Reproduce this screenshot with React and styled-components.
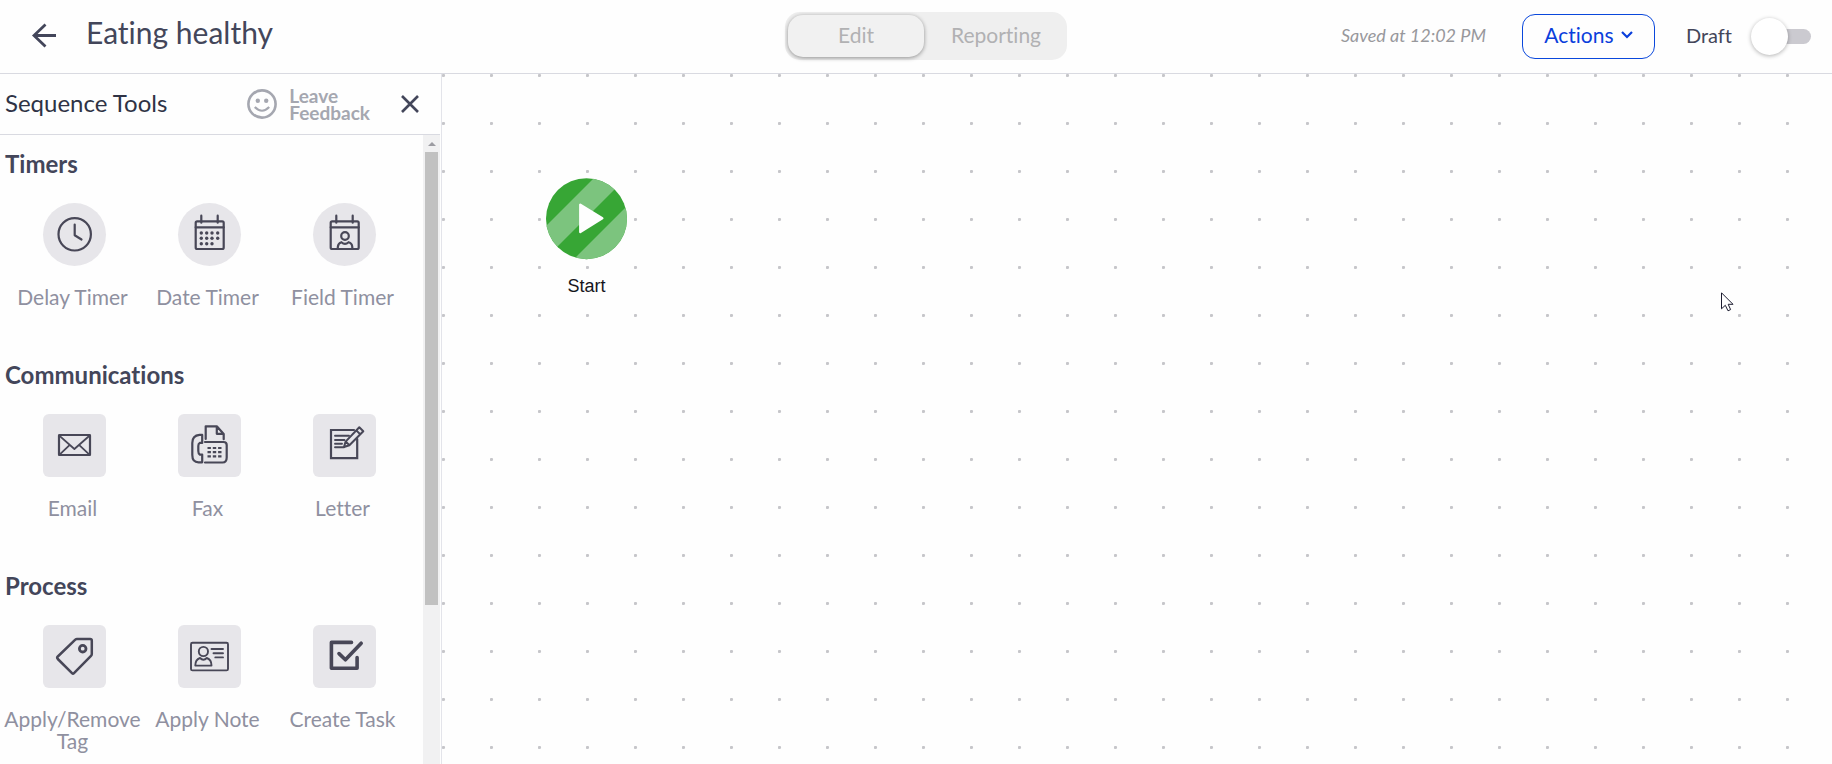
import { useState } from "react";
import styled, { createGlobalStyle } from "styled-components";

const GlobalStyle = createGlobalStyle`
  * {
    box-sizing: border-box;
  }
  body {
    margin: 0;
    background: #fefefe;
    font-family: Lato, "Liberation Sans", sans-serif;
    font-variant-ligatures: none;
    color: #43465a;
  }
  button {
    font-family: inherit;
    font-variant-ligatures: none;
    cursor: pointer;
  }
`;

const Page = styled.div`
  display: flex;
  flex-direction: column;
  height: 100vh;
  overflow: hidden;
`;

/* top bar */

const Header = styled.header`
  display: grid;
  grid-template-columns: 1fr auto 1fr;
  align-items: center;
  height: 74px;
  flex-shrink: 0;
  padding: 0 21px 1px 31px;
  border-bottom: 1px solid #d9dae1;
`;

const HeaderLeft = styled.div`
  display: flex;
  align-items: center;
  gap: 29px;
`;

const HeaderRight = styled.div`
  display: flex;
  align-items: center;
  justify-content: flex-end;
`;

const IconButton = styled.button`
  display: flex;
  padding: 0;
  border: 0;
  background: none;
  color: #43465a;
`;

const Title = styled.h1`
  margin: 0;
  padding-bottom: 8px;
  font-size: 30px;
  font-weight: 400;
  line-height: 36px;
`;

const Tabs = styled.div`
  display: flex;
  gap: 4px;
  width: 282px;
  height: 48px;
  margin-left: 10px;
  padding: 3px;
  border-radius: 15px;
  background: #efefef;
`;

const Tab = styled.button`
  flex: 1;
  padding: 0 0 4px;
  border: 0;
  border-radius: 15px;
  background: ${(props) => (props.$active ? "#f1f1f1" : "none")};
  box-shadow: ${(props) => (props.$active ? "0 1px 4px rgba(0, 0, 0, 0.4)" : "none")};
  color: #b1b1b3;
  font-size: 21px;
`;

const Saved = styled.span`
  padding-bottom: 3px;
  color: #98989c;
  font-size: 18px;
  font-style: italic;
`;

const ActionsButton = styled.button`
  display: flex;
  align-items: center;
  justify-content: center;
  gap: 7px;
  width: 133px;
  height: 45px;
  margin: 0 31px 0 36px;
  padding: 0 0 3px;
  border: 1px solid #0a48dc;
  border-radius: 13px;
  background: #fefefe;
  color: #0a3fdc;
  font-size: 21px;
`;

const SwitchLabel = styled.label`
  display: flex;
  align-items: center;
  gap: 27px;
  color: #43465a;
  font-size: 20px;
`;

const SwitchText = styled.span`
  padding-bottom: 3px;
`;

const Switch = styled.input`
  appearance: none;
  display: flex;
  align-items: center;
  width: 52px;
  height: 15px;
  margin: 0;
  border-radius: 8px;
  background: #cbcad0;

  &::before {
    content: "";
    flex-shrink: 0;
    width: 37px;
    height: 37px;
    margin-left: -8px;
    border-radius: 50%;
    background: #fff;
    box-shadow: 0 1px 4px rgba(0, 0, 0, 0.3);
  }
  &:checked::before {
    margin-left: 23px;
  }
`;

/* left panel */

const Main = styled.div`
  display: flex;
  flex: 1;
  min-height: 0;
`;

const Sidebar = styled.aside`
  display: flex;
  flex-direction: column;
  width: 442px;
  flex-shrink: 0;
  border-right: 1px solid #e3e4ea;
`;

const PanelHeader = styled.div`
  display: flex;
  align-items: center;
  height: 61px;
  flex-shrink: 0;
  margin-right: 1px;
  padding: 0 21px 0 5px;
  border-bottom: 1px solid #d9dae1;
`;

const PanelTitle = styled.h2`
  flex: 1;
  margin: 0;
  padding-bottom: 3px;
  color: #2f3345;
  font-size: 24px;
  font-weight: 400;
`;

const Feedback = styled.button`
  display: flex;
  align-items: center;
  gap: 12px;
  margin-right: 31px;
  padding: 0;
  border: 0;
  background: none;
  color: #a5a7b0;
  font-size: 19px;
  font-weight: 700;
  line-height: 17px;
  text-align: left;
`;

const PanelBody = styled.div`
  display: flex;
  flex: 1;
  min-height: 0;
`;

const ToolList = styled.div`
  flex: 1;
  padding: 15px 0 0 5px;
  overflow: hidden;
`;

const Section = styled.section`
  margin-bottom: 53px;
`;

const SectionTitle = styled.h3`
  margin: 0 0 25px;
  font-size: 24px;
  font-weight: 700;
  line-height: 28px;
`;

const ToolGrid = styled.div`
  display: grid;
  grid-template-columns: repeat(3, 135px);
`;

const Tool = styled.button`
  display: flex;
  flex-direction: column;
  align-items: center;
  gap: 20px;
  padding: 0;
  border: 0;
  background: none;
  color: #8f90a0;
  font-size: 21px;
  line-height: 22px;
`;

const Tile = styled.span`
  width: 63px;
  height: 63px;
  margin-left: 3px;
  border-radius: ${(props) => (props.$round ? "50%" : "6px")};
  background: #e7e6ea;
  color: #484757;
`;

const Scrollbar = styled.div`
  display: flex;
  flex-direction: column;
  align-items: center;
  width: 17px;
  margin-right: 1px;
  background: #f1f1f2;
`;

const ScrollArrow = styled.span`
  width: 0;
  margin: 7px 0 6px;
  border: 4px solid transparent;
  border-top: 0;
  border-bottom-color: #9c9ca2;
`;

const ScrollThumb = styled.div`
  width: 13px;
  height: 72%;
  background: #c1c1c1;
`;

/* canvas */

const Canvas = styled.main`
  position: relative;
  flex: 1;
  overflow: hidden;
`;

const Dots = styled.svg`
  display: block;
  width: 100%;
  height: 100%;
`;

const Node = styled.div`
  position: absolute;
  left: 104px;
  top: 104px;
  display: flex;
  flex-direction: column;
  align-items: center;
  gap: 16px;
  color: #15151c;
  font-family: "Liberation Sans", Arial, sans-serif;
  font-size: 18px;
  line-height: 20px;
`;

const Cursor = styled.svg`
  position: absolute;
  left: 1279px;
  top: 218px;
`;

const icons = {
  clock: (
    <>
      <circle cx="31.7" cy="31.3" r="16.2" />
      <path d="M31.7 21.5V32.2L38.5 36.5" />
    </>
  ),
  date: (
    <>
      <rect x="17.7" y="18.3" width="28" height="27.7" rx="1.5" />
      <path d="M17.7 24.3H45.7M23.3 12.7V19.7M39.7 12.7V19.7" />
      <g fill="currentColor" stroke="none">
        {[30, 35.3, 40.7].map((y, row) =>
          [23.3, 28.7, 34, 39.7].slice(0, row === 2 ? 3 : 4).map((x) => (
            <circle key={`${x}-${y}`} cx={x} cy={y} r="1.7" />
          ))
        )}
      </g>
    </>
  ),
  field: (
    <>
      <rect x="17.7" y="18.3" width="28" height="27.7" rx="1.5" />
      <path d="M17.7 24.3H45.7M23.3 12.7V19.7M39.7 12.7V19.7" />
      <circle cx="32" cy="33" r="3.8" />
      <path d="M24.8 45.5V44Q25.2 40 28.4 39.2Q32 42.4 35.6 39.2Q39 40 39.3 44V45.5" />
    </>
  ),
  email: (
    <>
      <rect x="16" y="21" width="31" height="20" rx="0.5" />
      <path d="M16 21.3L31.4 35L47 21.3M16.3 40.8L26.8 30.9M46.7 40.8L36 30.9" strokeWidth="1.8" />
    </>
  ),
  fax: (
    <>
      <path d="M24.2 20.9H21.5Q14.3 21.5 14.3 29V41Q14.3 48.3 20.5 48.3H24.2V40.6H21.8Q20.3 39.5 20.3 37V32Q20.3 29.8 21.8 28.9H24.2Z" />
      <path d="M27 28H45.5Q48.7 28 48.7 31V43.5Q48.7 48.5 44.5 48.5H27" />
      <path d="M27.7 25V12.3H38.8L45.7 20V25.2M38.8 12.8V19.8H45.2" />
      <path d="M29.5 34H43.5M29.5 38.2H43.5M29.5 42.4H43.5" strokeDasharray="3.4 1.9" strokeLinecap="butt" />
    </>
  ),
  letter: (
    <>
      <path d="M41 16H18V44.2H44.2V25" strokeLinejoin="miter" />
      <path d="M22 21.7H36M22 26H31.5M22 29.8H29M22 33.2H31" strokeWidth="1.9" />
      <path d="M31 33L32.6 27.6L46.3 13.3L50.3 17.2L36.4 31.2ZM32.6 27.6L36.4 31.2M43.3 16.4L47.2 20.3" strokeWidth="2" />
    </>
  ),
  tag: (
    <>
      <path d="M14.8 31.5L32.3 14.6Q33 14 34 14H47.2Q48.8 14 48.8 15.6V29Q48.8 30 48 30.8L31 48.2Q30 49.2 29 48.2L14.8 34Q13.6 32.7 14.8 31.5Z" strokeWidth="2.5" />
      <circle cx="39.7" cy="23.7" r="3.3" strokeWidth="2.8" />
    </>
  ),
  note: (
    <>
      <rect x="13" y="17.8" width="37" height="27.6" rx="1.5" strokeWidth="1.9" />
      <circle cx="25.4" cy="26.5" r="4.6" strokeWidth="1.9" />
      <path d="M17.3 40.6Q17.3 34.5 22 33Q25.4 36.5 28.8 33Q33.5 34.5 33.5 40.6Z" strokeWidth="1.9" />
      <path d="M33.5 24H45M35.5 28.2H45M37.3 32.4H45" strokeWidth="1.9" />
    </>
  ),
  task: (
    <path d="M38.5 17.4H18.4V43.2H44.1V32.5M26 28.6L32.4 34.8L48.2 18.2" strokeWidth="3.6" />
  ),
};

const sections = [
  {
    title: "Timers",
    round: true,
    tools: [
      { icon: "clock", label: "Delay Timer" },
      { icon: "date", label: "Date Timer" },
      { icon: "field", label: "Field Timer" },
    ],
  },
  {
    title: "Communications",
    tools: [
      { icon: "email", label: "Email" },
      { icon: "fax", label: "Fax" },
      { icon: "letter", label: "Letter" },
    ],
  },
  {
    title: "Process",
    tools: [
      { icon: "tag", label: "Apply/Remove Tag" },
      { icon: "note", label: "Apply Note" },
      { icon: "task", label: "Create Task" },
    ],
  },
];

const ToolIcon = ({ name }) => (
  <svg
    width="63"
    height="63"
    viewBox="0 0 63 63"
    fill="none"
    stroke="currentColor"
    strokeWidth="2.2"
    strokeLinecap="round"
    strokeLinejoin="round"
  >
    {icons[name]}
  </svg>
);

const TopBar = () => {
  const [tab, setTab] = useState("Edit");
  const [live, setLive] = useState(false);

  return (
    <Header>
      <HeaderLeft>
        <IconButton aria-label="Back">
          <svg width="26" height="26" viewBox="0 0 26 26" fill="none" stroke="currentColor" strokeWidth="2.8">
            <path d="M25 12.5H3M14.5 1.5L3 12.5L14.5 23.5" />
          </svg>
        </IconButton>
        <Title>Eating healthy</Title>
      </HeaderLeft>
      <Tabs>
        {["Edit", "Reporting"].map((name) => (
          <Tab key={name} $active={tab === name} onClick={() => setTab(name)}>
            {name}
          </Tab>
        ))}
      </Tabs>
      <HeaderRight>
        <Saved>Saved at 12:02 PM</Saved>
        <ActionsButton>
          Actions
          <svg width="12" height="8" viewBox="0 0 12 8" fill="none" stroke="currentColor" strokeWidth="2.2">
            <path d="M1 1L6 6L11 1" />
          </svg>
        </ActionsButton>
        <SwitchLabel>
          <SwitchText>Draft</SwitchText>
          <Switch type="checkbox" checked={live} onChange={() => setLive(!live)} />
        </SwitchLabel>
      </HeaderRight>
    </Header>
  );
};

const ToolPanel = () => (
  <Sidebar>
    <PanelHeader>
      <PanelTitle>Sequence Tools</PanelTitle>
      <Feedback>
        <svg width="30" height="30" viewBox="0 0 30 30" fill="none" stroke="currentColor" strokeWidth="2.6">
          <circle cx="15" cy="15" r="13.6" />
          <path d="M7.8 18Q15 25.5 22.2 18" strokeWidth="2.2" />
          <g fill="currentColor" stroke="none">
            <circle cx="10.8" cy="11.7" r="2.2" />
            <circle cx="19.2" cy="11.7" r="2.2" />
          </g>
        </svg>
        <span>
          Leave
          <br />
          Feedback
        </span>
      </Feedback>
      <IconButton aria-label="Close">
        <svg width="18" height="18" viewBox="0 0 18 18" fill="none" stroke="currentColor" strokeWidth="2.6">
          <path d="M1 1L17 17M17 1L1 17" />
        </svg>
      </IconButton>
    </PanelHeader>
    <PanelBody>
      <ToolList>
        {sections.map((section) => (
          <Section key={section.title}>
            <SectionTitle>{section.title}</SectionTitle>
            <ToolGrid>
              {section.tools.map((tool) => (
                <Tool key={tool.label}>
                  <Tile $round={section.round}>
                    <ToolIcon name={tool.icon} />
                  </Tile>
                  <span>{tool.label}</span>
                </Tool>
              ))}
            </ToolGrid>
          </Section>
        ))}
      </ToolList>
      <Scrollbar>
        <ScrollArrow />
        <ScrollThumb />
      </Scrollbar>
    </PanelBody>
  </Sidebar>
);

const StartNode = () => (
  <Node>
    <svg width="81" height="82" viewBox="0 0 81 82">
      <clipPath id="start-circle">
        <circle cx="40.5" cy="40.7" r="40.5" />
      </clipPath>
      <g clipPath="url(#start-circle)">
        <rect width="82" height="82" fill="#37a635" />
        <path d="M48 0H80L0 80V48ZM109 0L0 109H82V0Z" fill="#7cc47e" />
      </g>
      <path
        d="M34.3 26.7V54L56.3 40.3Z"
        fill="#fefefe"
        stroke="#fefefe"
        strokeWidth="2.4"
        strokeLinejoin="round"
      />
    </svg>
    Start
  </Node>
);

export default function App() {
  return (
    <Page>
      <GlobalStyle />
      <TopBar />
      <Main>
        <ToolPanel />
        <Canvas>
          <Dots>
            <pattern id="dots" width="48" height="48" patternUnits="userSpaceOnUse">
              <circle cx="1.5" cy="1.5" r="1.6" fill="#c6c6ca" />
            </pattern>
            <rect width="100%" height="100%" fill="url(#dots)" />
          </Dots>
          <StartNode />
          <Cursor width="13" height="20" viewBox="0 0 13 20">
            <path
              d="M0.5 0.8V16.8L4.3 13.3L7 18.8L9.6 17.6L7.2 12.3H12Z"
              fill="#fff"
              stroke="#1c1c30"
              strokeWidth="1"
            />
          </Cursor>
        </Canvas>
      </Main>
    </Page>
  );
}
